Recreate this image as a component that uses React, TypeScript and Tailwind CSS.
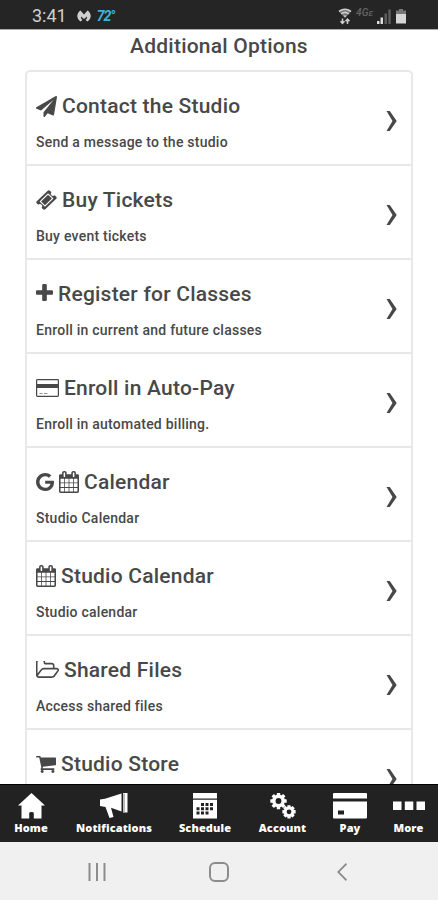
import type { ReactNode } from "react";

const PATHS = {
  plane:
    "M1764 11q33 24 27 64l-256 1536q-5 29-32 45-14 8-31 8-11 0-24-5l-453-185-242 295q-18 23-49 23-13 0-22-4-19-7-30.500-23.500t-11.500-36.500v-349l864-1059-1069 925-395-162q-37-14-40-55-2-40 32-59l1664-960q15-9 32-9 20 0 36 11z",
  ticket:
    "M1024 452l316 316-572 572-316-316zm-211 979l618-618q19-19 19-45t-19-45l-362-362q-18-18-45-18t-45 18l-618 618q-19 19-19 45t19 45l362 362q18 18 45 18t45-18zm889-637l-907 908q-37 37-90.500 37t-90.500-37l-126-126q56-56 56-136t-56-136-136-56-136 56l-125-126q-37-37-37-90.500t37-90.500l907-906q37-37 90.500-37t90.500 37l125 125q-56 56-56 136t56 136 136 56 136-56l126 125q37 37 37 90.500t-37 90.500z",
  plus: "M1600 736v192q0 40-28 68t-68 28h-416v416q0 40-28 68t-68 28h-192q-40 0-68-28t-28-68v-416h-416q-40 0-68-28t-28-68v-192q0-40 28-68t68-28h416v-416q0-40 28-68t68-28h192q40 0 68 28t28 68v416h416q40 0 68 28t28 68z",
  calendar:
    "M192 1664h288v-288h-288v288zm352 0h320v-288h-320v288zm-352-352h288v-320h-288v320zm352 0h320v-320h-320v320zm-352-384h288v-288h-288v288zm736 736h320v-288h-320v288zm-384-736h320v-288h-320v288zm768 736h288v-288h-288v288zm-384-352h320v-320h-320v320zm-352-864v-288q0-13-9.500-22.500t-22.500-9.500h-64q-13 0-22.500 9.500t-9.500 22.500v288q0 13 9.500 22.500t22.500 9.500h64q13 0 22.500-9.500t9.500-22.500zm736 864h288v-320h-288v320zm-384-384h320v-288h-320v288zm384 0h288v-288h-288v288zm32-480v-288q0-13-9.500-22.500t-22.500-9.500h-64q-13 0-22.500 9.500t-9.500 22.500v288q0 13 9.500 22.500t22.500 9.500h64q13 0 22.500-9.500t9.500-22.500zm384-64v1280q0 52-38 90t-90 38h-1408q-52 0-90-38t-38-90v-1280q0-52 38-90t90-38h128v-96q0-66 47-113t113-47h64q66 0 113 47t47 113v96h384v-96q0-66 47-113t113-47h64q66 0 113 47t47 113v96h128q52 0 90 38t38 90z",
  google:
    "M896 786h725q12 67 12 128 0 217-91 387.500t-259.500 266.500-386.500 96q-157 0-299-60.500t-245-163.500-163.500-245-60.500-299 60.500-299 163.500-245 245-163.500 299-60.500q300 0 515 201l-209 201q-123-119-306-119-129 0-238.500 65t-173.500 176.500-64 243.500 64 243.500 173.500 176.500 238.500 65q87 0 160-24t120-60 82-82 51.500-87 22.500-78h-436v-264z",
  folder:
    "M1845 931q0-35-53-35h-1088q-40 0-85.500 21.500t-71.500 52.500l-294 363q-18 24-18 40 0 35 53 35h1088q40 0 86-22t71-53l294-363q18-22 18-39zm-1141-163h768v-160q0-40-28-68t-68-28h-576q-40 0-68-28t-28-68v-64q0-40-28-68t-68-28h-320q-40 0-68 28t-28 68v853l256-315q44-53 116-87.500t140-34.500zm1269 163q0 62-46 120l-295 363q-43 53-116 87.500t-140 34.500h-1088q-92 0-158-66t-66-158v-960q0-92 66-158t158-66h320q92 0 158 66t66 158v32h544q92 0 158 66t66 158v160h192q54 0 99 24.500t67 70.500q15 32 15 68z",
  cart: "M704 1536q0 52-38 90t-90 38-90-38-38-90 38-90 90-38 90 38 38 90zm896 0q0 52-38 90t-90 38-90-38-38-90 38-90 90-38 90 38 38 90zm128-1088v512q0 24-16.500 42.500t-40.500 21.500l-1044 122q13 60 13 70 0 16-24 64h920q26 0 45 19t19 45-19 45-45 19h-1024q-26 0-45-19t-19-45q0-11 8-31.500t16-36 21.500-40 15.500-29.500l-177-823h-204q-26 0-45-19t-19-45 19-45 45-19h256q16 0 28.500 6.500t19.500 15.500 13 24.500 8 26 5.500 29.500 4.500 26h1201q26 0 45 19t19 45z",
};

function Glyph({ d, box, className }: { d: string; box: string; className: string }) {
  return (
    <svg viewBox={box} preserveAspectRatio="none" fill="currentColor" className={className}>
      <path d={d} />
    </svg>
  );
}

const CalendarIcon = () => (
  <Glyph d={PATHS.calendar} box="64 0 1664 1792" className="h-[22px] w-[20px]" />
);

const CardIcon = () => (
  <svg viewBox="0 0 23 18" className="h-[18px] w-[23px]">
    <rect x="0.600" y="0.600" width="21.800" height="16.800" rx="0.800" fill="none" stroke="currentColor" strokeWidth="1.200" />
    <path d="M1 5h21v4H1z" fill="currentColor" />
    <path d="M3.500 14.500h3M8 14.500h3.500" stroke="currentColor" strokeWidth="1" opacity="0.6" />
  </svg>
);

type Option = { title: string; text?: string; icon: ReactNode; gap: string };

const OPTIONS: Option[] = [
  {
    title: "Contact the Studio",
    text: "Send a message to the studio",
    icon: <Glyph d={PATHS.plane} box="0 0 1792 1792" className="h-[21px] w-[21px]" />,
    gap: "gap-[5px]",
  },
  {
    title: "Buy Tickets",
    text: "Buy event tickets",
    icon: <Glyph d={PATHS.ticket} box="30 30 1732 1732" className="h-[20px] w-[21px]" />,
    gap: "gap-[5px]",
  },
  {
    title: "Register for Classes",
    text: "Enroll in current and future classes",
    icon: <Glyph d={PATHS.plus} box="192 128 1408 1408" className="mb-[3px] h-[17px] w-[17px]" />,
    gap: "gap-[5px]",
  },
  {
    title: "Enroll in Auto-Pay",
    text: "Enroll in automated billing.",
    icon: <CardIcon />,
    gap: "gap-[5px]",
  },
  {
    title: "Calendar",
    text: "Studio Calendar",
    icon: (
      <>
        <Glyph d={PATHS.google} box="128 128 1505 1536" className="h-[18px] w-[18px]" />
        <CalendarIcon />
      </>
    ),
    gap: "gap-[5px]",
  },
  {
    title: "Studio Calendar",
    text: "Studio calendar",
    icon: <CalendarIcon />,
    gap: "gap-[5px]",
  },
  {
    title: "Shared Files",
    text: "Access shared files",
    icon: <Glyph d={PATHS.folder} box="64 256 1909 1280" className="mb-[2px] h-[17px] w-[23px]" />,
    gap: "gap-[5px]",
  },
  {
    title: "Studio Store",
    icon: <Glyph d={PATHS.cart} box="64 256 1664 1408" className="h-[17px] w-[20px]" />,
    gap: "gap-[5px]",
  },
];

function OptionRow({ title, text, icon, gap }: Option) {
  return (
    <li className="flex h-[94px] shrink-0 items-start justify-between border-b-2 border-[#e8e8e8] pt-[20px] pr-[14px] pl-[9px]">
      <div>
        <div className={`flex h-7 items-center ${gap}`}>
          {icon}
          <h2 className="text-[21px] leading-7 font-medium tracking-[0.220px] whitespace-nowrap">{title}</h2>
        </div>
        {text && (
          <p className="mt-[12px] text-[14px] leading-5 font-medium tracking-[0.240px] whitespace-nowrap">{text}</p>
        )}
      </div>
      <svg viewBox="0 0 11 20" className="mt-[19px] h-[20px] w-[11px]" fill="currentColor">
        <path d="M0.500 0h3.300L10.700 10 3.800 20H0.500L6.500 10z" />
      </svg>
    </li>
  );
}

function StatusBar() {
  return (
    <header className="flex h-[29px] shrink-0 items-center bg-[#252525] pt-[3px] pr-[31px] pl-8 text-[#d0d0d0]">
      <span className="text-[18px] leading-6">3:41</span>
      <svg viewBox="0 0 14 12" className="ml-[10px] h-[12px] w-[14px]" fill="#cfcfcf">
        <path d="M3.500 0.500L7 4.500l3.500-4C14.500 3 15 8.500 10.500 11.500L8.500 10q2-1.500 1.500-3.500L7 9 4 6.500Q3.500 8.500 5.500 10l-2 1.500C-1 8.500-0.500 3 3.500 0.500z" />
      </svg>
      <span className="ml-[6px] text-[14px] font-bold tracking-[-1.100px] text-[#3cb3de] italic">72°</span>
      <div className="ml-auto flex items-center">
        <svg viewBox="0 0 14 17" className="h-[17px] w-[14px]" fill="none" stroke="#cfcfcf">
          <path d="M1 3.500q6-4.500 12 0L7 10z" fill="#777" stroke="none" />
          <path d="M1 3.500q6-4.500 12 0M3.200 5.800q3.800-2.800 7.600 0" strokeWidth="1.600" />
          <path d="M5.200 7.400h3.600L7 9.600z" fill="#cfcfcf" stroke="none" />
          <path d="M4.500 10.500v5M2.500 13.300l2 2.200 2-2.200M9.500 16v-5M7.500 13.200l2-2.200 2 2.200" strokeWidth="1.500" />
        </svg>
        <span className="ml-[4px] w-[19px] -translate-y-[3px] text-[10px] leading-3 font-medium tracking-[0.200px] whitespace-nowrap text-[#666] italic">
          4G<span className="text-[8px]">E</span>
        </span>
        <svg viewBox="0 0 14 15" className="ml-[2px] h-[15px] w-[14px]">
          <path d="M0 12h2.500v3H0z" fill="#ddd" />
          <path d="M3.500 8.500H6V15H3.500z" fill="#ddd" />
          <path d="M7.500 4.500H10V15H7.500zM11.300 0.500h2.500V15h-2.500z" fill="#5c5c5c" />
        </svg>
        <svg viewBox="0 0 12 15" className="ml-[4px] h-[15px] w-[12px]">
          <path d="M4 0h4v1.500h3V7H1V1.500h3z" fill="#777" />
          <path d="M1 5h10v9.500H1z" fill="#d6d6d6" />
        </svg>
      </div>
    </header>
  );
}

// spokes of a gear, drawn around its own centre
const TEETH = [0, 45, 90, 135];

function Gear({ x, y, r }: { x: number; y: number; r: number }) {
  return (
    <g transform={`translate(${x} ${y})`}>
      {TEETH.map((a) => (
        <rect key={a} x={-1.7} y={-r} width="3.400" height={r * 2} rx="0.500" transform={`rotate(${a})`} />
      ))}
      <circle r={r * 0.78} />
      <circle r={r * 0.36} fill="#222" />
    </g>
  );
}

const TABS: { label: string; width: string; icon: ReactNode }[] = [
  {
    label: "Home",
    width: "w-[62px]",
    icon: (
      <svg viewBox="0 0 27 26" className="h-[26px] w-[27px]" fill="currentColor">
        <path d="M13.500 0L27 12.500h-3.500V25.500H15.800V20q0-1-2.300-1t-2.300 1v5.500H3.500v-13H0z" />
      </svg>
    ),
  },
  {
    label: "Notifications",
    width: "w-[104px]",
    icon: (
      <svg viewBox="0 0 28 26" className="h-[26px] w-[28px]" fill="currentColor">
        <path d="M0 6.500l5-0.800L21.500 0.500v18L11 14.800l2.500 9.200-4 1L5.500 14 0 13z" />
        <path d="M23 0h4.500v19.500H23z" />
        <path d="M24 0.500v18.500" stroke="#777" strokeWidth="1" />
      </svg>
    ),
  },
  {
    label: "Schedule",
    width: "w-[78px]",
    icon: (
      <svg viewBox="0 0 24 26" className="h-[26px] w-[24px]" fill="currentColor">
        <path d="M0 0h24v5.500H0zM0 6.800h24V25.500H0z" />
        <path
          d="M8 10h3v3H8zM12.500 10h3v3h-3zM17 10h3v3h-3zM3.500 14.300h3v3h-3zM8 14.300h3v3H8zM12.500 14.300h3v3h-3zM17 14.300h3v3h-3zM3.500 18.600h3v3h-3zM8 18.600h3v3H8zM12.500 18.600h3v3h-3z"
          fill="#222"
        />
      </svg>
    ),
  },
  {
    label: "Account",
    width: "w-[77px]",
    icon: (
      <svg viewBox="0 0 26 26" className="h-[26px] w-[26px]" fill="currentColor">
        <Gear x={8.5} y={8} r={8.2} />
        <Gear x={19} y={18.8} r={6.6} />
      </svg>
    ),
  },
  {
    label: "Pay",
    width: "w-[58px]",
    icon: (
      <svg viewBox="0 0 34 26" className="h-[26px] w-[34px]" fill="currentColor">
        <path d="M1 0h32q1 0 1 1v4.500H0V1q0-1 1-1zM0 8.500h34v16q0 1-1 1H1q-1 0-1-1z" />
        <path d="M5 17.500h6v4H5z" fill="#222" />
      </svg>
    ),
  },
  {
    label: "More",
    width: "w-[59px]",
    icon: (
      <svg viewBox="0 0 32 26" className="h-[26px] w-[32px]" fill="currentColor">
        <path d="M0 8.500h8.500V17H0zM11.800 8.500h8.500V17h-8.500zM23.500 8.500H32V17h-8.500z" />
      </svg>
    ),
  },
];

function TabBar() {
  return (
    <nav className="flex h-[58px] shrink-0 border-t border-black bg-[#222] pt-[8px] text-white">
      {TABS.map((t) => (
        <div key={t.label} className={`flex shrink-0 flex-col items-center ${t.width}`}>
          {t.icon}
          <span className="font-['Open_Sans',sans-serif] text-[11px] leading-[18px] font-extrabold tracking-[0.120px] whitespace-nowrap">
            {t.label}
          </span>
        </div>
      ))}
    </nav>
  );
}

function SystemNav() {
  return (
    <footer className="flex h-[58px] shrink-0 items-center bg-[#f0f0f0] pt-[2px] pl-[88px] text-[#8c8c8c]">
      <svg viewBox="0 0 18 18" className="h-[18px] w-[18px]" fill="none" stroke="currentColor" strokeWidth="2">
        <path d="M1.500 0v18M9 0v18M16.500 0v18" />
      </svg>
      <svg viewBox="0 0 20 20" className="ml-[103px] h-[20px] w-[20px]" fill="none" stroke="currentColor" strokeWidth="2">
        <rect x="1" y="1" width="18" height="18" rx="5" />
      </svg>
      <svg viewBox="0 0 10 18" className="ml-[108px] h-[18px] w-[10px]" fill="none" stroke="currentColor" strokeWidth="1.800">
        <path d="M9.500 0.700L1.200 9l8.300 8.300" />
      </svg>
    </footer>
  );
}

export default function App() {
  return (
    <div className="flex h-[900px] w-[438px] flex-col overflow-hidden bg-white font-[Roboto,sans-serif] text-[#484848]">
      <StatusBar />
      <main className="flex min-h-0 flex-1 flex-col overflow-hidden border-t border-[#aaa] px-[25px]">
        <h1 className="h-10 shrink-0 pt-[2px] text-center text-[21px] leading-7 font-medium tracking-[0.220px]">
          Additional Options
        </h1>
        <ul className="flex flex-col rounded-t-[5px] border-2 border-b-0 border-[#e8e8e8]">
          {OPTIONS.map((o) => (
            <OptionRow key={o.title} {...o} />
          ))}
        </ul>
      </main>
      <TabBar />
      <SystemNav />
    </div>
  );
}
